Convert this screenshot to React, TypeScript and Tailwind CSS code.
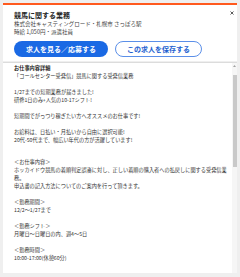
import React from "react";

const body1 = [
  "「コールセンター受発信」競馬に関する受発信業務",
  "",
  "1/27までの短期業務が届きました!",
  "研修1日のみ+人気の10-17シフト!",
  "",
  "短期間でがっつり稼ぎたい方へオススメのお仕事です!",
  "",
  "お給料は、日払い・月払いから自由に選択可能!",
  "20代-50代まで、幅広い年代の方が活躍しています!",
];

const body2 = [
  "＜お仕事内容＞",
  "ホッカイドウ競馬の着順判定誤審に対し、正しい着順の購入者への払戻しに関する受発信業務。",
  "申込書の記入方法についてのご案内を行って頂きます。",
  "",
  "＜勤務期間＞",
  "12/2～1/27まで",
  "",
  "＜勤務シフト＞",
  "月曜日～日曜日の内、週4～5日",
  "",
  "＜勤務時間＞",
  "10:00-17:00(休憩60分)",
];

function App() {
  return (
    <div className="h-[277px] w-[240px] bg-[#efefef] px-[3px] pt-[3px] pb-[4px] flex flex-col font-['Noto_Sans_CJK_JP',sans-serif] overflow-hidden">
      <JobHeader />
      <div className="mt-[1px] flex-1 flex bg-white border-t border-[#dcdcdc] overflow-hidden">
        <div className="flex-1 pl-[11px] pr-[3px] pt-[1px] text-[5.2px] leading-[8px] text-[#333]">
          <p className="font-bold text-[#222]">お仕事内容詳細</p>
          {body1.map((line, i) => (
            <p key={i} className="h-[8px]">
              {line}
            </p>
          ))}
          <div className="mt-[14px]">
            {body2.map((line, i) => (
              <p key={i} className="min-h-[8px]">
                {line}
              </p>
            ))}
          </div>
        </div>
        <div className="w-[5px] bg-[#f6f6f6] flex flex-col items-center">
          <div className="h-[12px] flex items-start pt-[2px]">
            <svg width="3" height="2" viewBox="0 0 3 2">
              <polygon points="1.5,0 3,2 0,2" fill="#a3a3a3" />
            </svg>
          </div>
          <div className="w-[4px] h-[92px] bg-[#c9c9c9]" />
        </div>
      </div>
    </div>
  );
}

export default App;

const JobHeader = () => {
  return (
    <div className="relative bg-white border-t-2 border-[#ff5a1e] pl-[11px] pt-[5px] pb-[4px]">
      <h1 className="text-[7px] leading-[10px] h-[10px] font-bold text-[#222]">
        競馬に関する業務
      </h1>
      <p className="text-[5.5px] leading-[8px] text-[#444]">
        株式会社キャスティングロード・札幌市 さっぽろ駅
      </p>
      <p className="text-[5.5px] leading-[8px] text-[#444]">時給 1,050円・派遣社員</p>
      <div className="mt-[5px] flex gap-[7px]">
        <button className="w-[94px] h-[16px] rounded-full bg-[#1a69e4] text-white text-[7px] font-bold leading-none">
          求人を見る／応募する
        </button>
        <button className="w-[87px] h-[16px] rounded-full bg-white border border-[#5b8fe8] text-[#1d5fd0] text-[7px] font-bold leading-none">
          この求人を保存する
        </button>
      </div>
      <svg
        className="absolute right-[3px] top-[6px]"
        width="4"
        height="4"
        viewBox="0 0 4 4"
      >
        <path d="M0.5 0.5 L3.5 3.5 M3.5 0.5 L0.5 3.5" stroke="#333" strokeWidth="0.8" />
      </svg>
    </div>
  );
};
